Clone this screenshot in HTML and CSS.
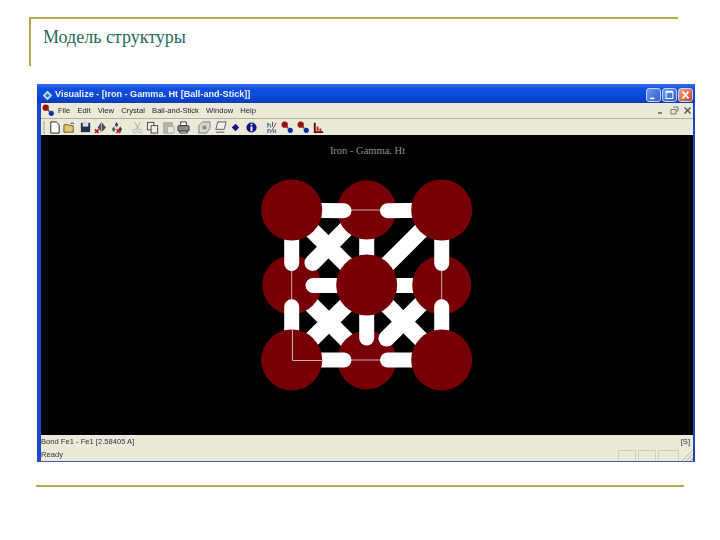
FILE: index.html
```html
<!DOCTYPE html>
<html lang="ru">
<head>
<meta charset="utf-8">
<title>Модель структуры</title>
<link rel="stylesheet" href="styles.css">
</head>
<body>
<svg class="defs" width="0" height="0" aria-hidden="true">
  <defs>
    <symbol id="molecule-red" viewBox="0 0 14 14">
      <circle cx="4" cy="4" r="3.4" fill="#a01010"/><circle cx="10" cy="10" r="2.8" fill="#1030a0"/><path d="M6 6l2 2" stroke="#444" stroke-width="1.5"/>
    </symbol>
  </defs>
</svg>
<div class="slide">
  <header class="head"><h1 class="heading">Модель структуры</h1></header>
  <main class="window">
    <div class="titlebar">
      <svg class="app-icon" viewBox="0 0 14 14"><path d="M7 1l6 6-6 6-6-6z" fill="#cfe0f5"/><path d="M7 4l3 3-3 3-3-3z" fill="#3a6cc0"/></svg>
      <span class="title-text">Visualize - [Iron - Gamma. Ht [Ball-and-Stick]]</span>
      <span class="win-buttons">
        <span class="win-btn"><svg viewBox="0 0 14 14"><rect x="3" y="10" width="5" height="2" fill="#fff"/></svg></span>
        <span class="win-btn"><svg viewBox="0 0 14 14"><path d="M3 3.5h8v7.5H3z" fill="none" stroke="#fff" stroke-width="1.2"/><path d="M3 3h8" stroke="#fff" stroke-width="2"/></svg></span>
        <span class="win-btn win-close"><svg viewBox="0 0 14 14"><path d="M3.5 3l7 8M10.5 3l-7 8" stroke="#fff" stroke-width="2"/></svg></span>
      </span>
    </div>
    <nav class="menubar">
      <svg class="menu-icon"><use href="#molecule-red"/></svg>
      <span class="menu-item">File</span>
      <span class="menu-item">Edit</span>
      <span class="menu-item">View</span>
      <span class="menu-item">Crystal</span>
      <span class="menu-item">Ball-and-Stick</span>
      <span class="menu-item">Window</span>
      <span class="menu-item">Help</span>
      <span class="mdi-buttons">
        <svg viewBox="0 0 9 9"><path d="M1 7h4" stroke="#555" stroke-width="1.4"/></svg>
        <svg viewBox="0 0 9 9"><path d="M3 1h5v4H6M1 3.5h5V8H1z" fill="none" stroke="#777"/></svg>
        <svg viewBox="0 0 9 9"><path d="M1.5 1.5l6 6M7.5 1.5l-6 6" stroke="#555" stroke-width="1.4"/></svg>
      </span>
    </nav>
    <div class="toolbar">
      <span class="grip"></span>
      <svg class="tool" viewBox="0 0 14 14"><path d="M3 1h6l3 3v9H3z" fill="#fff" stroke="#222"/></svg>
      <svg class="tool" viewBox="0 0 14 14"><path d="M1 4h5l1 1h4v7H1z" fill="#e8c860" stroke="#554"/><path d="M8 3q2-2 4 0" fill="none" stroke="#333"/></svg>
      <svg class="tool" viewBox="0 0 14 14"><rect x="2" y="2" width="10" height="10" fill="#203048"/><rect x="4" y="2" width="6" height="4" fill="#dde"/></svg>
      <svg class="tool" viewBox="0 0 14 14"><path d="M8 1l5 6-5 5-4-5z" fill="#405060"/><path d="M8 1v11" stroke="#c8c0a0"/><path d="M1 9l4 4M5 9l-4 4" stroke="#c01010" stroke-width="1.6"/></svg>
      <svg class="tool" viewBox="0 0 14 14"><path d="M7 1l2 3-2 3-2-3z" fill="#405060"/><path d="M11 6l2 3-2 3-2-3z" fill="#304050"/><path d="M4 6l2 3-2 3-2-3z" fill="#506070"/><path d="M7 9l4 4M11 9l-4 4" stroke="#c01010" stroke-width="1.5"/></svg>
      <span class="tool-gap"></span>
      <svg class="tool" viewBox="0 0 14 14"><path d="M4 1l4 8M10 1l-4 8" stroke="#b8b8b0" stroke-width="1.2"/><circle cx="4" cy="11" r="2" fill="none" stroke="#b8b8b0"/><circle cx="10" cy="11" r="2" fill="none" stroke="#b8b8b0"/></svg>
      <svg class="tool" viewBox="0 0 14 14"><rect x="1.5" y="1.5" width="7" height="8" fill="#f4f0d8" stroke="#445"/><rect x="5.5" y="5" width="7" height="8" fill="#f4f0d8" stroke="#445"/></svg>
      <svg class="tool" viewBox="0 0 14 14"><rect x="2" y="2" width="9" height="11" fill="#b8b8a8" stroke="#999"/><rect x="6" y="6" width="7" height="7" fill="#e8e8e0" stroke="#aaa"/></svg>
      <svg class="tool" viewBox="0 0 14 14"><path d="M4 1h6v4H4z" fill="#fff" stroke="#333"/><rect x="1" y="5" width="12" height="6" rx="1" fill="#8a8a90" stroke="#333"/><path d="M3 11h8v2H3z" fill="#fff" stroke="#333"/></svg>
      <span class="tool-gap"></span>
      <svg class="tool" viewBox="0 0 14 14"><path d="M5 1h8v7l-4 5H1V5z" fill="#d8d8cc" stroke="#778"/><path d="M5 5h4v4H5z" fill="#888"/></svg>
      <svg class="tool" viewBox="0 0 14 14"><path d="M4 1h9l-2 8H2z" fill="#f0f0e4" stroke="#556"/><path d="M2 12h9" stroke="#556"/></svg>
      <svg class="tool" viewBox="0 0 14 14"><path d="M7 3l4 4-4 4-4-4z" fill="#10108a"/></svg>
      <svg class="tool" viewBox="0 0 14 14"><circle cx="7" cy="7" r="5.5" fill="#14148a"/><path d="M7 3v1.6M7 6v5" stroke="#fff" stroke-width="2"/></svg>
      <span class="tool-gap"></span>
      <svg class="tool" viewBox="0 0 14 14"><path d="M2 2v5M2 4q3-2 3 3M7 1v5M2 9v4M2 10l2-1 1 1v3M6 10l1-1 1 1v3M10 9v4" stroke="#2050a0" fill="none"/><path d="M11 2l-5 9" stroke="#c03030"/></svg>
      <svg class="tool" viewBox="0 0 14 14"><use href="#molecule-red"/></svg>
      <svg class="tool" viewBox="0 0 14 14"><use href="#molecule-red"/></svg>
      <svg class="tool" viewBox="0 0 14 14"><path d="M3 2v10h9" fill="none" stroke="#501010" stroke-width="2"/><path d="M6 11V6M9 11V8" stroke="#c02020" stroke-width="2"/></svg>
    </div>
    <svg class="viewport" viewBox="41 135 652 300" role="img">
      <rect class="backdrop" x="41" y="135" width="652" height="300"/>
      <text class="caption" x="367.5" y="153.5" text-anchor="middle">Iron - Gamma. Ht</text>
      <line class="stick butt diag" x1="291.7" y1="285" x2="366.7" y2="360"/>
      <circle class="atom" cx="291.7" cy="285" r="29.5"/>
      <circle class="atom" cx="366.7" cy="360" r="29.5"/>
      <line class="stick diag" x1="312.7" y1="262.7" x2="350" y2="225"/>
      <line class="stick diag" x1="386.7" y1="338.3" x2="425" y2="300"/>
      <line class="stick butt" x1="366.7" y1="210" x2="366.7" y2="285"/>
      <line class="stick butt" x1="366.7" y1="285.5" x2="441.7" y2="285.5"/>
      <circle class="atom" cx="366.7" cy="210" r="29.5"/>
      <circle class="atom" cx="441.7" cy="285" r="29.5"/>
      <path class="edge" d="M291.7 210V360H441.7V210H291.7"/>
      <line class="stick butt diag" x1="291.7" y1="210" x2="366.7" y2="285"/>
      <line class="stick butt diag" x1="441.7" y1="210" x2="366.7" y2="285"/>
      <line class="stick butt diag" x1="441.7" y1="360" x2="366.7" y2="285"/>
      <line class="stick diag" x1="312.7" y1="338.3" x2="366.7" y2="285"/>
      <line class="stick" x1="313" y1="285.5" x2="366.7" y2="285.5"/>
      <line class="stick" x1="366.7" y1="338" x2="366.7" y2="285"/>
      <line class="stick" x1="291.7" y1="210" x2="344" y2="210.7"/>
      <line class="stick" x1="387.5" y1="210.7" x2="441.7" y2="210"/>
      <line class="stick" x1="291.7" y1="360" x2="344" y2="360"/>
      <line class="stick" x1="387.5" y1="360" x2="441.7" y2="360"/>
      <line class="stick" x1="291.7" y1="210" x2="291.7" y2="263.5"/>
      <line class="stick" x1="291.7" y1="360" x2="291.7" y2="306.8"/>
      <line class="stick" x1="441.7" y1="210" x2="441.7" y2="263.5"/>
      <line class="stick" x1="441.7" y1="360" x2="441.7" y2="306.8"/>
      <circle class="atom" cx="366.7" cy="285" r="30.5"/>
      <circle class="atom" cx="291.7" cy="210" r="30.5"/>
      <circle class="atom" cx="441.7" cy="210" r="30.5"/>
      <circle class="atom" cx="291.7" cy="360" r="30.5"/>
      <circle class="atom" cx="441.7" cy="360" r="30.5"/>
      <path class="edge" d="M292.5 329V360.5H323"/>
    </svg>
    <footer class="status">
      <div class="status-row">
        <span>Bond Fe1 - Fe1 [2.58405 A]</span>
        <span class="status-tag">[S]</span>
      </div>
      <div class="status-row status-last">
        <span>Ready</span>
        <span class="panes">
          <span class="pane pane-a"></span>
          <span class="pane pane-a"></span>
          <span class="pane pane-b"></span>
          <span class="resize"></span>
        </span>
      </div>
    </footer>
  </main>
  <div class="foot-rule"></div>
</div>
</body>
</html>
```
FILE: styles.css
```css
* { box-sizing: border-box; }
html, body { margin: 0; padding: 0; background: #fff; }
body { width: 720px; height: 540px; overflow: hidden; }
.defs { position: absolute; }
.slide { padding: 17px 0 0 29px; }
.head {
  width: 649px;
  height: 49px;
  border-top: 2px solid #b5a84f;
  border-left: 2px solid #b5a84f;
  padding: 7px 0 0 12px;
}
.heading {
  margin: 0;
  font: 400 18px/22px "Liberation Serif", serif;
  color: #1f6b5c;
}
.window {
  margin: 18px 0 0 8px;
  width: 658px;
  height: 378px;
  display: flex;
  flex-direction: column;
  background: #ece9d8;
  border-left: 4px solid #1a48c8;
  border-right: 2px solid #1a48c8;
  border-bottom: 1px solid #4a5cc0;
}
.titlebar {
  flex: none;
  height: 19px;
  margin-left: -4px;
  margin-right: -2px;
  padding: 3px 2px 0 5px;
  display: flex;
  align-items: center;
  gap: 2px;
  background: linear-gradient(#2f6fe8 0, #0f50e0 25%, #0a48d8 70%, #0c3cb0 100%);
}
.app-icon { width: 11px; height: 11px; flex: none; }
.title-text {
  font: 700 9.1px/1 "Liberation Sans", sans-serif;
  color: #eef2ff;
  white-space: nowrap;
  filter: blur(.3px);
}
.win-buttons { margin-left: auto; display: flex; gap: 1px; }
.win-btn {
  width: 15px;
  height: 14px;
  border: 1px solid #c4d4f8;
  border-radius: 3px;
  background: linear-gradient(135deg, #6c98f0, #2c5ad0);
  display: flex;
}
.win-close { background: linear-gradient(135deg, #f0a080, #d04020); }
.win-btn svg { width: 100%; height: 100%; }
.menubar {
  flex: none;
  height: 16px;
  display: flex;
  align-items: center;
  font: 400 7.6px/1 "Liberation Sans", sans-serif;
  color: #222;
  padding: 0 0 0 1px;
  border-bottom: 1px solid #b4b19a;
}
.menu-icon { width: 13px; height: 13px; margin-right: 3px; flex: none; }
.menu-item { margin-right: 7.2px; white-space: nowrap; filter: blur(.25px); }
.mdi-buttons { margin-left: auto; display: flex; gap: 4px; padding-right: 1px; }
.mdi-buttons svg { width: 9px; height: 9px; }
.toolbar {
  flex: none;
  height: 16px;
  display: flex;
  align-items: center;
  gap: 2.5px;
  padding-left: 2px;
}
.grip { width: 2px; height: 13px; background: #c8c5b0; }
.tool { width: 13px; height: 13px; flex: none; }
.tool-gap { width: 3px; flex: none; }
.viewport { flex: none; display: block; width: 652px; height: 300px; }
.backdrop { fill: #000; }
.caption { font: 10.5px "Liberation Serif", serif; fill: #8e8e8e; }
.atom { fill: #760006; }
.edge { fill: none; stroke: #c9b0b0; stroke-width: 1; }
.stick { stroke: #fff; stroke-width: 15; stroke-linecap: round; }
.diag { stroke-width: 16.5; }
.butt { stroke-linecap: butt; }
.status {
  flex: 1;
  display: flex;
  flex-direction: column;
  padding-top: 1px;
  font: 400 7.6px/1 "Liberation Sans", sans-serif;
  color: #333;
}
.status-row { display: flex; justify-content: space-between; align-items: center; height: 12.5px; }
.status-row > span { filter: blur(.2px); }
.status-tag { padding-right: 3px; }
.panes { display: flex; align-items: flex-end; gap: 2px; height: 12px; }
.pane { height: 11px; border: 1px solid #cfccb8; border-bottom: 0; }
.pane-a { width: 18px; }
.pane-b { width: 21px; }
.resize {
  width: 12px;
  height: 11px;
  background: repeating-linear-gradient(135deg, #ece9d8 0 2px, #b8b5a0 2px 3px);
  clip-path: polygon(100% 0, 100% 100%, 0 100%);
}
.foot-rule { width: 648px; margin: 23px 0 0 7px; border-top: 2px solid #b5a84f; }
```
